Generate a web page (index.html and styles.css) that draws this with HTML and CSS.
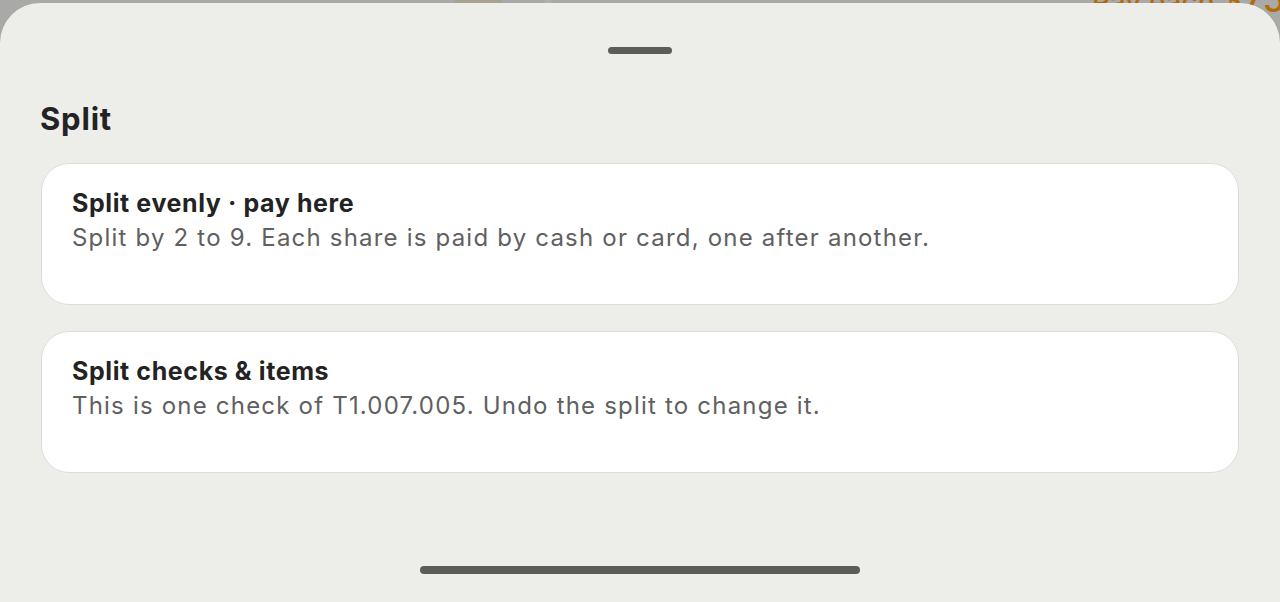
FILE: index.html
```html
<!DOCTYPE html>
<html lang="en">
<head>
<meta charset="utf-8">
<title>Split</title>
<link rel="stylesheet" href="styles.css">
</head>
<body>
<div class="backdrop">
  <div class="bd-block bd-block-a"></div>
  <div class="bd-block bd-block-b"></div>
  <div class="bd-pay"><span class="bd-pay-label">Pay each</span> <span class="bd-pay-amount">$75.9</span></div>
</div>
<div class="sheet">
  <div class="grabber"></div>
  <h2 class="sheet-title">Split</h2>
  <div class="options">
    <div class="option">
      <div class="option-title">Split evenly · pay here</div>
      <div class="option-desc">Split by 2 to 9. Each share is paid by cash or card, one after another.</div>
    </div>
    <div class="option">
      <div class="option-title">Split checks &amp; items</div>
      <div class="option-desc">This is one check of T1.007.005. Undo the split to change it.</div>
    </div>
  </div>
  <div class="home-indicator"></div>
</div>
</body>
</html>
```

FILE: styles.css
```css
html, body {
  margin: 0;
  padding: 0;
  width: 1280px;
  height: 602px;
  overflow: hidden;
}
body {
  background: #a9a9a7;
  font-family: Inter, "Noto Sans", "Liberation Sans", sans-serif;
  position: relative;
}
.backdrop {
  position: absolute;
  inset: 0;
  z-index: 0;
  overflow: hidden;
}
.bd-block {
  position: absolute;
  top: 0;
  height: 3px;
}
.bd-block-a { left: 455px; width: 47px; background: #a8a290; }
.bd-block-b { left: 545px; width: 6px; background: #b0b0ae; }
.bd-pay {
  position: absolute;
  left: 1092px;
  top: -18px;
  line-height: 34px;
  color: #b56a08;
  white-space: nowrap;
}
.bd-pay-label {
  font-size: 28px;
  font-weight: 500;
}
.bd-pay-amount {
  font-size: 36px;
  font-weight: 500;
}
.sheet {
  position: relative;
  z-index: 1;
  margin-top: 3px;
  height: 599px;
  background: #ededea;
  border-radius: 40px 40px 0 0;
  display: flex;
  flex-direction: column;
  padding: 0 41px 0 41px;
  box-sizing: border-box;
}
.grabber {
  align-self: center;
  width: 64px;
  height: 7px;
  border-radius: 4px;
  background: #5c5c5a;
  margin-top: 44px;
}
.sheet-title {
  margin: 47px 0 0 -1px;
  font-size: 31px;
  line-height: 36px;
  font-weight: 700;
  color: #232323;
  letter-spacing: 0.8px;
}
.options {
  margin-top: 26px;
  display: flex;
  flex-direction: column;
  gap: 26px;
}
.option {
  background: #ffffff;
  border: 1px solid #dcdcd8;
  border-radius: 28px;
  height: 142px;
  box-sizing: border-box;
  padding: 23px 30px 0 30px;
}
.option-title {
  font-size: 25px;
  line-height: 32px;
  font-weight: 700;
  color: #232323;
  letter-spacing: 0.6px;
}
.option-desc {
  margin-top: 2px;
  font-size: 24px;
  line-height: 34px;
  font-weight: 400;
  color: #606060;
  letter-spacing: 1.2px;
}
.home-indicator {
  position: absolute;
  left: 420px;
  top: 563px;
  width: 440px;
  height: 8px;
  border-radius: 4px;
  background: #5c5c5a;
}
```
